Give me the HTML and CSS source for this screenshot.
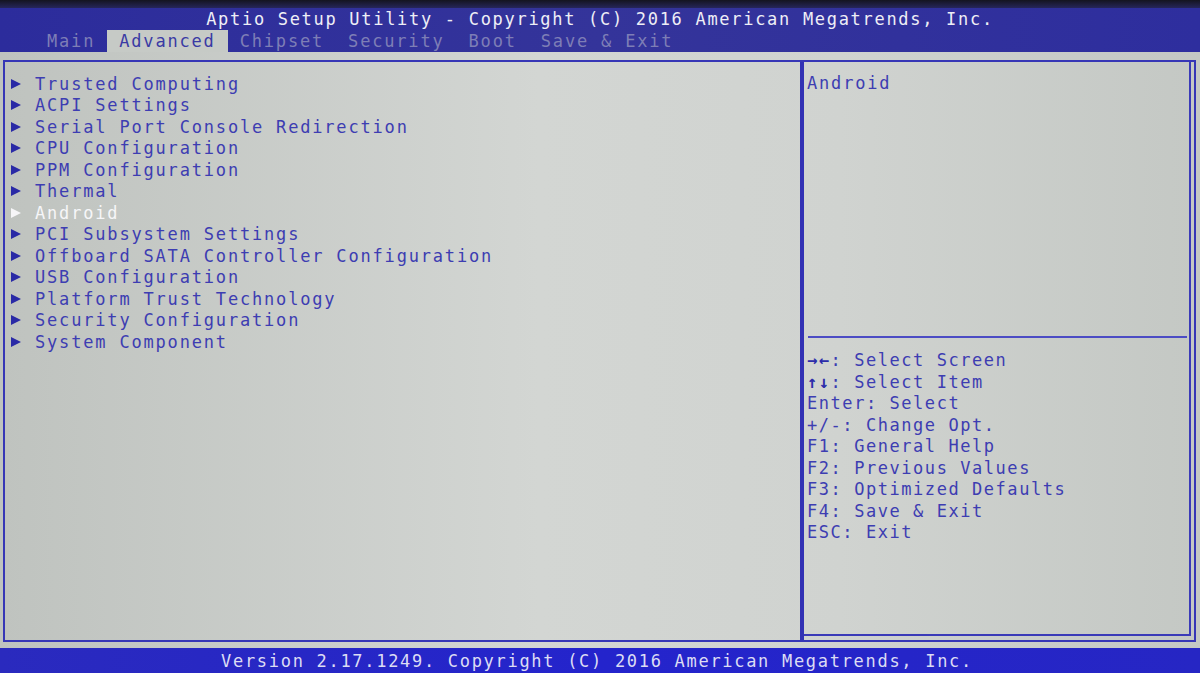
FILE: index.html
```html
<!DOCTYPE html>
<html lang="en">
<head>
    <meta charset="UTF-8">
    <meta name="viewport" content="width=device-width, initial-scale=1.0">
    <title>Aptio Setup Utility</title>
    <link rel="stylesheet" href="styles.css">
</head>
<body>
    <div class="top-edge"></div>
    <header class="bios-header">
        <div class="title">Aptio Setup Utility - Copyright (C) 2016 American Megatrends, Inc.</div>
        <nav class="tabs">
            <span class="tab">Main</span><span class="tab active">Advanced</span><span class="tab">Chipset</span><span class="tab">Security</span><span class="tab">Boot</span><span class="tab">Save &amp; Exit</span>
        </nav>
    </header>

    <main class="bios-main">
        <div class="frame">
            <ul class="menu">
                <li class="item"><i class="arrow"></i>Trusted Computing</li>
                <li class="item"><i class="arrow"></i>ACPI Settings</li>
                <li class="item"><i class="arrow"></i>Serial Port Console Redirection</li>
                <li class="item"><i class="arrow"></i>CPU Configuration</li>
                <li class="item"><i class="arrow"></i>PPM Configuration</li>
                <li class="item"><i class="arrow"></i>Thermal</li>
                <li class="item selected"><i class="arrow"></i>Android</li>
                <li class="item"><i class="arrow"></i>PCI Subsystem Settings</li>
                <li class="item"><i class="arrow"></i>Offboard SATA Controller Configuration</li>
                <li class="item"><i class="arrow"></i>USB Configuration</li>
                <li class="item"><i class="arrow"></i>Platform Trust Technology</li>
                <li class="item"><i class="arrow"></i>Security Configuration</li>
                <li class="item"><i class="arrow"></i>System Component</li>
            </ul>

            <aside class="side">
                <div class="side-box">
                    <div class="desc">Android</div>
                    <div class="divider"></div>
                    <ul class="help">
                        <li><b class="keys">&rarr;&larr;</b>: Select Screen</li>
                        <li><b class="keys">&uarr;&darr;</b>: Select Item</li>
                        <li>Enter: Select</li>
                        <li>+/-: Change Opt.</li>
                        <li>F1: General Help</li>
                        <li>F2: Previous Values</li>
                        <li>F3: Optimized Defaults</li>
                        <li>F4: Save &amp; Exit</li>
                        <li>ESC: Exit</li>
                    </ul>
                </div>
            </aside>
        </div>
    </main>

    <footer class="bios-footer">Version 2.17.1249. Copyright (C) 2016 American Megatrends, Inc.</footer>
</body>
</html>
```

FILE: styles.css
```css
/* Tela do BIOS */
* {
    margin: 0;
    padding: 0;
    box-sizing: border-box;
}
body {
    width: 1200px;
    height: 673px;
    display: flex;
    flex-direction: column;
    overflow: hidden;
    font-family: 'DejaVu Sans Mono', 'Liberation Mono', monospace;
    font-size: 17px;
    letter-spacing: 1.82px;
    white-space: nowrap;
    background: #cdd0cd;
}
ul {
    list-style: none;
}

.top-edge {
    height: 8px;
    background: linear-gradient(to bottom, #141420, #26265a);
}

.bios-header {
    height: 44px;
    background: linear-gradient(to right, #2c2c9c, #34349a 50%, #2e2e9e);
}
.title {
    height: 22px;
    line-height: 22px;
    text-align: center;
    color: #eeeef6;
    letter-spacing: 1.7px;
}
.tabs {
    display: flex;
    height: 22px;
    line-height: 22px;
    padding-left: 35px;
}
.tab {
    padding: 0 12px;
    color: #7e7eb6;
    white-space: pre;
}
.tab.active {
    background: #c6cac6;
    color: #3a3aa4;
}

.bios-main {
    flex: 1;
    padding: 8px 4px 6px 3px;
    background: linear-gradient(to right, #bfc3bf, #d3d6d3 45%, #d0d3d0 70%, #c4c8c4);
}
.frame {
    height: 100%;
    display: flex;
    border: 2px solid #3636b6;
}

.menu {
    flex: 1;
    padding: 11px 0 0 6px;
}
.item {
    display: flex;
    align-items: center;
    height: 21.5px;
    color: #3d3db2;
}
.arrow {
    width: 0;
    height: 0;
    margin: 0 14px 0 0;
    border-left: 10px solid #2a2aa6;
    border-top: 5px solid transparent;
    border-bottom: 5px solid transparent;
}
.item.selected {
    color: #f6f6f8;
}
.item.selected .arrow {
    border-left-color: #f6f6f8;
}

.side {
    width: 394px;
    border-left: 4px solid #3232b4;
    padding: 0 3px 4px 0;
}
.side-box {
    height: 100%;
    border-right: 2px solid #3a3ab8;
    border-bottom: 2px solid #3a3ab8;
    color: #3d3db2;
}
.desc {
    height: 274px;
    padding: 11px 0 0 3px;
    line-height: 21.5px;
}
.divider {
    height: 2px;
    margin: 0 2px 0 4px;
    background: #4c4cc4;
}
.help {
    padding: 12px 0 0 3px;
    letter-spacing: 1.55px;
}
.help li {
    height: 21.5px;
    line-height: 21.5px;
}
.keys {
    color: #2c2caa;
}

.bios-footer {
    height: 25px;
    line-height: 25px;
    padding: 1px 6px 0 0;
    text-align: center;
    color: #dcdcf4;
    letter-spacing: 1.7px;
    background: linear-gradient(to right, #2a2abe, #2424cc 50%, #2626c4);
}
```
